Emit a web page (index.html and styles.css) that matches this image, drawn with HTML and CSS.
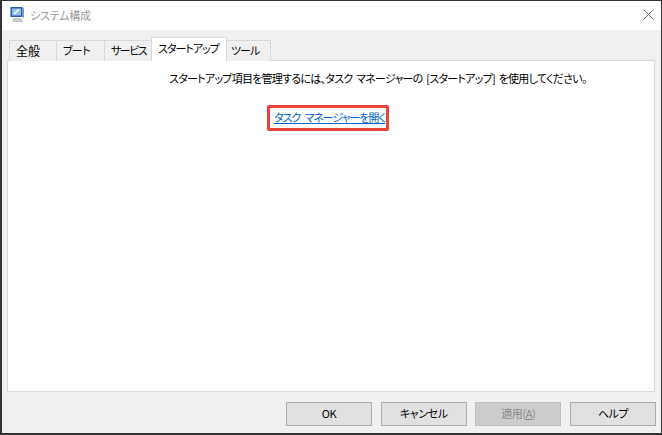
FILE: index.html
```html
<!DOCTYPE html>
<html lang="ja">
<head>
    <meta charset="UTF-8">
    <title>システム構成</title>
    <link rel="stylesheet" href="styles.css">
</head>
<body>
    <div class="window">
        <div class="titlebar">
            <svg class="app-icon" width="16" height="18" viewBox="0 0 16 18">
                <rect x="1.5" y="1" width="12" height="10" fill="#2f55b8"/>
                <rect x="3" y="2.5" width="9" height="7" fill="#8fc4ee"/>
                <path d="M5 8 L10 3.5" stroke="#fff" stroke-width="1.5"/>
                <path d="M13.5 1 L15 2.5 V12 L13.5 11 Z" fill="#7f8fc4"/>
                <path d="M4 12 H12 L14 16 H3 Z" fill="#c9cbd0"/>
            </svg>
            <span class="title">システム構成</span>
            <svg class="close" width="11" height="11" viewBox="0 0 11 11">
                <path d="M0.5 0.5 L10.5 10.5 M10.5 0.5 L0.5 10.5" stroke="#6f6f6f" stroke-width="1" fill="none"/>
            </svg>
        </div>
        <div class="content">
            <div class="tabs">
                <div class="tab tab-general">全般</div>
                <div class="tab tab-boot">ブート</div>
                <div class="tab tab-services">サービス</div>
                <div class="tab tab-startup active">スタートアップ</div>
                <div class="tab tab-tools">ツール</div>
            </div>
            <div class="panel">
                <p class="message">スタートアップ項目を管理するには、タスク マネージャーの [スタートアップ] を使用してください。</p>
                <div class="link-row">
                    <a class="task-link" href="#">タスク マネージャーを開く</a>
                </div>
            </div>
            <div class="buttons">
                <button>OK</button>
                <button>キャンセル</button>
                <button class="disabled">適用(<u>A</u>)</button>
                <button>ヘルプ</button>
            </div>
        </div>
    </div>
</body>
</html>
```

FILE: styles.css
```css
html, body { margin: 0; padding: 0; }
body { font-family: "Noto Sans CJK JP", "Liberation Sans", sans-serif; font-size: 11px; font-feature-settings: "palt"; color: #000; background: #fff; }
.window { box-sizing: border-box; width: 662px; height: 435px; border: 2px solid #333; border-top-width: 1px; border-right-width: 1px; display: flex; flex-direction: column; background: #f0f0f0; }
.titlebar { box-sizing: border-box; height: 29px; background: #fff; display: flex; align-items: center; padding: 0 7px 2px 7px; flex: none; }
.app-icon { flex: none; }
.title { margin-left: 5px; color: #9a9a9a; font-size: 11px; letter-spacing: -0.2px; }
.close { margin-left: auto; }
.content { flex: 1; display: flex; flex-direction: column; padding: 0 5px 7px 5px; min-height: 0; }
.tabs { display: flex; align-items: flex-end; height: 31px; flex: none; padding-left: 2px; position: relative; z-index: 1; margin-bottom: -1px; }
.tab { box-sizing: border-box; height: 21px; padding-left: 6px; border: 1px solid #d9d9d9; border-bottom: none; border-left: none; background: #f0f0f0; line-height: 19px; white-space: nowrap; letter-spacing: -0.7px; }
.tab-general { width: 48px; border-left: 1px solid #d9d9d9; font-size: 12px; letter-spacing: 0; }
.tab-boot { width: 48px; }
.tab-services { width: 47px; letter-spacing: -1.5px; }
.tab-tools { width: 44px; padding-left: 4px; letter-spacing: -1px; }
.tab.active { height: 24px; width: 76px; background: #fff; line-height: 21px; border-left: 1px solid #d9d9d9; margin-left: -1px; letter-spacing: -1px; }
.panel { box-sizing: border-box; flex: 1; background: #fff; border: 1px solid #d9d9d9; margin-right: 1px; min-height: 0; }
.message { margin: 8px 0 0 161px; line-height: 18px; white-space: nowrap; letter-spacing: -0.74px; word-spacing: 2px; }
.link-row { margin: 18px 0 0 259px; }
.task-link { display: inline-block; box-sizing: border-box; height: 26px; padding: 0 1px 0 4px; border: 3px solid #e8443a; border-radius: 2px; color: #0066cc; line-height: 19px; text-decoration: underline; letter-spacing: -1.05px; word-spacing: 3px; }
.buttons { display: flex; justify-content: flex-end; gap: 8.67px; padding-top: 10px; flex: none; }
button { box-sizing: border-box; width: 86px; height: 24px; padding: 0 0 2px; border: 1px solid #adadad; background: #e1e1e1; font-family: inherit; font-size: 11px; font-feature-settings: inherit; letter-spacing: -0.4px; color: #000; }
button.disabled { background: #cccccc; border-color: #bfbfbf; color: #8a8a8a; }
```
